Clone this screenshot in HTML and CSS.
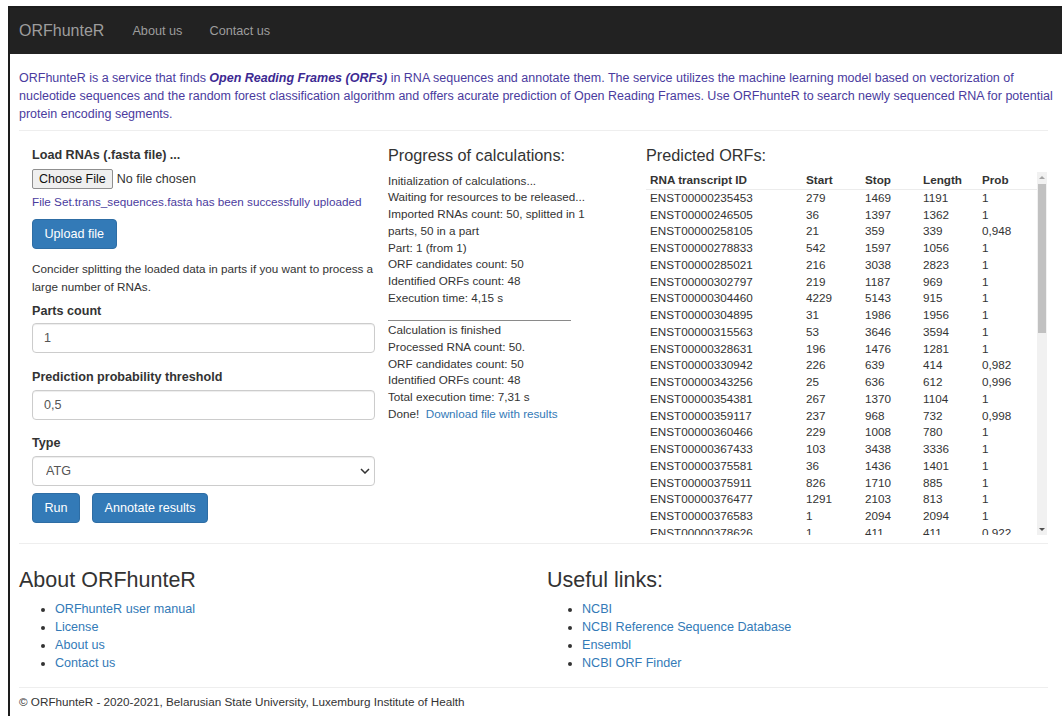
FILE: index.html
```html
<!DOCTYPE html>
<html lang="en">
<head>
<meta charset="utf-8">
<title>ORFhunteR</title>
<link rel="stylesheet" href="styles.css">
</head>
<body>
<div class="frame">
  <nav class="navbar">
    <a class="brand" href="#">ORFhunteR</a>
    <a class="nav-link" href="#">About us</a>
    <a class="nav-link" href="#">Contact us</a>
  </nav>

  <main class="page">
    <p class="intro">ORFhunteR is a service that finds <b><i>Open Reading Frames (ORFs)</i></b> in RNA sequences and annotate them. The service utilizes the machine learning model based on vectorization of nucleotide sequences and the random forest classification algorithm and offers acurate prediction of Open Reading Frames. Use ORFhunteR to search newly sequenced RNA for potential protein encoding segments.</p>
    <hr class="rule">

    <section class="workspace">
      <form class="col-form">
        <label class="field-label first">Load RNAs (.fasta file) ...</label>
        <input class="file-input" type="file">
        <p class="upload-msg">File Set.trans_sequences.fasta has been successfully uploaded</p>
        <button class="btn btn-upload" type="button">Upload file</button>
        <p class="hint">Concider splitting the loaded data in parts if you want to process a large number of RNAs.</p>
        <label class="field-label parts">Parts count</label>
        <input class="text-input parts-input" type="text" value="1">
        <label class="field-label threshold">Prediction probability threshold</label>
        <input class="text-input" type="text" value="0,5">
        <label class="field-label type">Type</label>
        <div class="select-wrap">
          <select class="select">
            <option>ATG</option>
          </select>
          <svg class="chevron" width="10" height="6" viewBox="0 0 10 6"><path d="M1 1l4 4 4-4" fill="none" stroke="#333" stroke-width="1.5"/></svg>
        </div>
        <div class="actions">
          <button class="btn" type="button">Run</button>
          <button class="btn" type="button">Annotate results</button>
        </div>
      </form>

      <div class="col-progress">
        <h3 class="col-title">Progress of calculations:</h3>
        <div class="log">
          <div>Initialization of calculations...</div>
          <div>Waiting for resources to be released...</div>
          <div>Imported RNAs count: 50, splitted in 1 parts, 50 in a part</div>
          <div>Part: 1 (from 1)</div>
          <div>ORF candidates count: 50</div>
          <div>Identified ORFs count: 48</div>
          <div>Execution time: 4,15 s</div>
        </div>
        <hr class="log-rule">
        <div class="log">
          <div>Calculation is finished</div>
          <div>Processed RNA count: 50.</div>
          <div>ORF candidates count: 50</div>
          <div>Identified ORFs count: 48</div>
          <div>Total execution time: 7,31 s</div>
          <div>Done! &nbsp;<a class="link" href="#">Download file with results</a></div>
        </div>
      </div>

      <div class="col-results">
        <h3 class="col-title">Predicted ORFs:</h3>
        <div class="table-box">
          <div class="table-viewport">
            <table class="orf-table">
              <colgroup>
                <col class="c-id"><col class="c-start"><col class="c-stop"><col class="c-len"><col class="c-prob">
              </colgroup>
              <thead>
                <tr><th>RNA transcript ID</th><th>Start</th><th>Stop</th><th>Length</th><th>Prob</th></tr>
              </thead>
              <tbody>
                <tr><td>ENST00000235453</td><td>279</td><td>1469</td><td>1191</td><td>1</td></tr>
                <tr><td>ENST00000246505</td><td>36</td><td>1397</td><td>1362</td><td>1</td></tr>
                <tr><td>ENST00000258105</td><td>21</td><td>359</td><td>339</td><td>0,948</td></tr>
                <tr><td>ENST00000278833</td><td>542</td><td>1597</td><td>1056</td><td>1</td></tr>
                <tr><td>ENST00000285021</td><td>216</td><td>3038</td><td>2823</td><td>1</td></tr>
                <tr><td>ENST00000302797</td><td>219</td><td>1187</td><td>969</td><td>1</td></tr>
                <tr><td>ENST00000304460</td><td>4229</td><td>5143</td><td>915</td><td>1</td></tr>
                <tr><td>ENST00000304895</td><td>31</td><td>1986</td><td>1956</td><td>1</td></tr>
                <tr><td>ENST00000315563</td><td>53</td><td>3646</td><td>3594</td><td>1</td></tr>
                <tr><td>ENST00000328631</td><td>196</td><td>1476</td><td>1281</td><td>1</td></tr>
                <tr><td>ENST00000330942</td><td>226</td><td>639</td><td>414</td><td>0,982</td></tr>
                <tr><td>ENST00000343256</td><td>25</td><td>636</td><td>612</td><td>0,996</td></tr>
                <tr><td>ENST00000354381</td><td>267</td><td>1370</td><td>1104</td><td>1</td></tr>
                <tr><td>ENST00000359117</td><td>237</td><td>968</td><td>732</td><td>0,998</td></tr>
                <tr><td>ENST00000360466</td><td>229</td><td>1008</td><td>780</td><td>1</td></tr>
                <tr><td>ENST00000367433</td><td>103</td><td>3438</td><td>3336</td><td>1</td></tr>
                <tr><td>ENST00000375581</td><td>36</td><td>1436</td><td>1401</td><td>1</td></tr>
                <tr><td>ENST00000375911</td><td>826</td><td>1710</td><td>885</td><td>1</td></tr>
                <tr><td>ENST00000376477</td><td>1291</td><td>2103</td><td>813</td><td>1</td></tr>
                <tr><td>ENST00000376583</td><td>1</td><td>2094</td><td>2094</td><td>1</td></tr>
                <tr><td>ENST00000378626</td><td>1</td><td>411</td><td>411</td><td>0,922</td></tr>
              </tbody>
            </table>
          </div>
          <div class="scrollbar">
            <span class="arrow arrow-up"></span>
            <span class="thumb"></span>
            <span class="track-rest"></span>
            <span class="arrow arrow-down"></span>
          </div>
        </div>
      </div>
    </section>

    <hr class="rule rule-bottom">

    <section class="about">
      <div class="about-col">
        <h2 class="about-title">About ORFhunteR</h2>
        <ul class="link-list">
          <li><a class="link" href="#">ORFhunteR user manual</a></li>
          <li><a class="link" href="#">License</a></li>
          <li><a class="link" href="#">About us</a></li>
          <li><a class="link" href="#">Contact us</a></li>
        </ul>
      </div>
      <div class="about-col">
        <h2 class="about-title">Useful links:</h2>
        <ul class="link-list links-right">
          <li><a class="link" href="#">NCBI</a></li>
          <li><a class="link" href="#">NCBI Reference Sequence Database</a></li>
          <li><a class="link" href="#">Ensembl</a></li>
          <li><a class="link" href="#">NCBI ORF Finder</a></li>
        </ul>
      </div>
    </section>

    <hr class="rule rule-footer">
    <footer class="copyright">© ORFhunteR - 2020-2021, Belarusian State University, Luxemburg Institute of Health</footer>
  </main>
</div>
</body>
</html>
```

FILE: styles.css
```css
html, body {
  margin: 0;
  padding: 0;
  overflow: hidden;
  background: #fff;
}

body {
  font-family: "Liberation Sans", Arial, sans-serif;
  font-size: 11.7px;
  color: #333;
}

a { text-decoration: none; }

.frame {
  margin: 6px 0 0 8px;
  border-left: 2px solid #1d1d1d;
  border-top: 2px solid #1d1d1d;
  min-height: 720px;
}

/* top navigation */
.navbar {
  height: 46px;
  background: #222;
  display: flex;
  align-items: center;
  padding-left: 9px;
}

.brand {
  color: #9d9d9d;
  font-size: 16px;
  margin-right: 28px;
}

.nav-link {
  color: #9d9d9d;
  font-size: 12.7px;
  margin-right: 27px;
}

/* page body */
.page {
  padding: 15px 14px 0 9px;
}

.intro {
  margin: 0;
  width: 1052px;
  font-size: 12.5px;
  line-height: 18px;
  color: #4a3b9e;
}

.intro b { color: #3d2a92; }

.rule {
  border: 0;
  border-top: 1px solid #eee;
  margin: 7px 0 0;
  height: 0;
}

.workspace {
  display: flex;
  padding: 14px 0 0 13px;
}

/* left column: upload and run form */
.col-form {
  width: 343px;
  margin: 0 13px 0 0;
  display: flex;
  flex-direction: column;
  align-items: flex-start;
}

.field-label {
  font-weight: bold;
  font-size: 12.6px;
  line-height: 18px;
}

.field-label.first { margin-top: 1px; }
.field-label.parts { margin-top: 6px; }
.field-label.threshold { margin-top: 15px; }
.field-label.type { margin-top: 14px; }

.file-input {
  margin-top: 5px;
  height: 20px;
  font-family: "Liberation Sans", Arial, sans-serif;
  font-size: 12.5px;
  color: #333;
  padding: 0;
}

.file-input::file-selector-button {
  font-family: "Liberation Sans", Arial, sans-serif;
  font-size: 12.5px;
  height: 20px;
  padding: 0 6px;
  margin-right: 4px;
  background: #efefef;
  border: 1px solid #8f8f8f;
  border-radius: 2px;
  color: #111;
}

.upload-msg {
  margin: 4px 0 0;
  line-height: 18px;
  color: #4a3b9e;
}

.btn {
  height: 30px;
  padding: 0 11.5px;
  background: #337ab7;
  border: 1px solid #2e6da4;
  border-radius: 4px;
  color: #fff;
  font-family: "Liberation Sans", Arial, sans-serif;
  font-size: 12.6px;
}

.btn-upload { margin-top: 8px; }

.hint {
  margin: 11px 0 0;
  line-height: 18px;
}

.text-input {
  box-sizing: border-box;
  width: 343px;
  height: 30px;
  margin-top: 4px;
  padding: 0 11px;
  border: 1px solid #ccc;
  border-radius: 4px;
  box-shadow: inset 0 1px 1px rgba(0, 0, 0, .075);
  font-family: "Liberation Sans", Arial, sans-serif;
  font-size: 12.6px;
  color: #555;
}

.parts-input { margin-top: 3px; }

.select-wrap {
  position: relative;
  margin-top: 4px;
  width: 343px;
  height: 30px;
}

.select {
  box-sizing: border-box;
  width: 100%;
  height: 30px;
  appearance: none;
  -webkit-appearance: none;
  background: #fff;
  padding: 0 13px;
  border: 1px solid #ccc;
  border-radius: 4px;
  box-shadow: inset 0 1px 1px rgba(0, 0, 0, .075);
  font-family: "Liberation Sans", Arial, sans-serif;
  font-size: 12.6px;
  color: #555;
}

.chevron {
  position: absolute;
  right: 5px;
  top: 12px;
}

.actions {
  display: flex;
  gap: 12px;
  margin-top: 7px;
}

/* middle column: progress log */
.col-progress {
  width: 258px;
}

.col-title {
  margin: 0 0 7.6px;
  font-weight: normal;
  font-size: 16.25px;
  line-height: 20px;
}

.log {
  line-height: 16.75px;
  width: 210px;
}

.log-rule {
  width: 183px;
  margin: 13px 0 1.6px;
  border: 0;
  border-top: 1px solid #8a8a8a;
  height: 0;
}

.link { color: #337ab7; }

/* right column: results table */
.col-results {
  width: 401px;
}

.col-results .col-title { margin-bottom: 7px; }

.table-box {
  display: flex;
  height: 363px;
}

.table-viewport {
  flex: 1;
  overflow: hidden;
}

.orf-table {
  width: 100%;
  border-collapse: collapse;
  table-layout: fixed;
  line-height: 16.75px;
}

.c-id { width: 160px; }
.c-start { width: 59px; }
.c-stop { width: 58px; }
.c-len { width: 59px; }

.orf-table th,
.orf-table td {
  padding: 0;
  text-align: left;
  white-space: nowrap;
}

.orf-table th:first-child,
.orf-table td:first-child {
  padding-left: 4px;
}

.orf-table th {
  font-weight: bold;
  border-bottom: 1px solid #ececec;
}

.scrollbar {
  width: 10px;
  background: #f1f1f1;
  display: flex;
  flex-direction: column;
  align-items: center;
}

.arrow {
  width: 0;
  height: 0;
  border-left: 3px solid transparent;
  border-right: 3px solid transparent;
}

.arrow-up {
  margin-top: 4px;
  border-bottom: 3px solid #a3a3a3;
}

.arrow-down {
  margin-bottom: 4px;
  border-top: 3px solid #505050;
}

.thumb {
  margin-top: 5px;
  width: 8px;
  height: 149px;
  background: #c1c1c1;
}

.track-rest { flex: 1; }

/* about block */
.rule-bottom { margin-top: 8px; }

.about {
  display: flex;
}

.about-col:first-child { width: 528px; }

.about-title {
  margin: 24px 0 0;
  font-weight: normal;
  font-size: 21.5px;
  line-height: 24px;
}

.link-list {
  margin: 8px 0 0;
  padding-left: 36px;
  font-size: 12.6px;
  line-height: 18px;
}

.links-right { padding-left: 35px; }

.rule-footer { margin-top: 15px; }

.copyright {
  margin-top: 5px;
  line-height: 18px;
}
```
